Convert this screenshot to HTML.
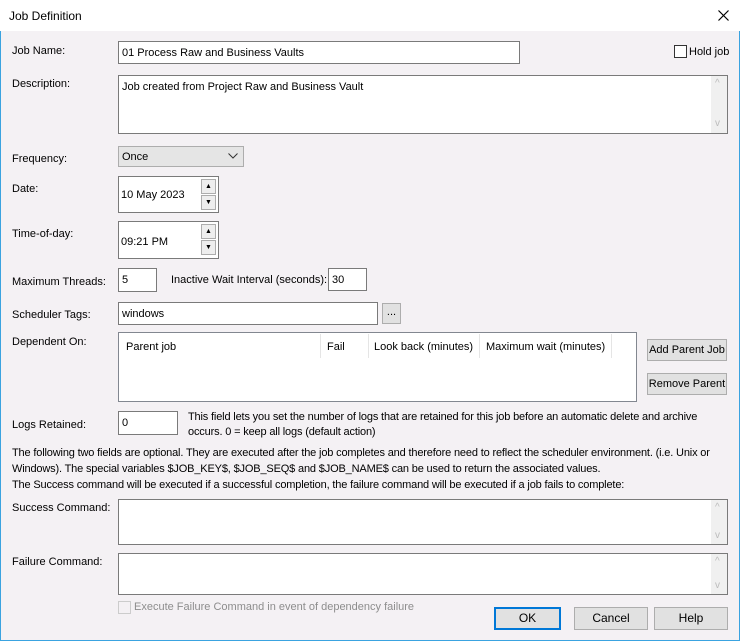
<!DOCTYPE html>
<html><head><meta charset="utf-8"><style>
*{box-sizing:border-box;margin:0;padding:0}
body{width:740px;height:641px;overflow:hidden;font-family:"Liberation Sans",sans-serif;font-size:11px;color:#000;background:#f4f1f4;position:relative}
.w{position:absolute;left:0;top:0;width:740px;height:641px;border:1px solid #3aa3e0;border-top:none}
.t{position:absolute;left:0;top:0;width:740px;height:31px;background:#fff}
.a{position:absolute;white-space:nowrap}
.l{margin-top:2px}
.p{letter-spacing:-0.16px}
.in{position:absolute;background:#fff;border:1px solid #7a7a7a;padding:5px 3px;white-space:nowrap;overflow:hidden}
.btn{position:absolute;background:#e1e1e1;border:1px solid #adadad;text-align:center;line-height:20px;white-space:nowrap}
.sp{position:absolute;width:15px;height:15px;background:#eee;border:1px solid #adadad;font-size:7px;text-align:center;line-height:13px}
.sa{position:absolute;color:#bbb;font-size:10px}
</style></head><body><div class="w"></div>
<div class="t"><div class="a" style="left:9px;top:9px;font-size:12px">Job Definition</div>
<svg class="a" style="left:718px;top:10px" width="11" height="11"><path d="M0.5 0.5L10.5 10.5M10.5 0.5L0.5 10.5" stroke="#000" stroke-width="1.2"/></svg></div>

<div class="a l" style="left:12px;top:43px">Job Name:</div>
<div class="in" style="left:118px;top:41px;width:402px;height:23px">01 Process Raw and Business Vaults</div>
<div class="a" style="left:674px;top:45px;width:13px;height:13px;background:#fff;border:1px solid #333"></div>
<div class="a l" style="left:689px;top:44px">Hold job</div>

<div class="a l" style="left:12px;top:76px">Description:</div>
<div class="in" style="left:118px;top:75px;width:610px;height:59px">Job created from Project Raw and Business Vault</div>
<div class="a" style="left:711px;top:76px;width:16px;height:57px;background:#f0f0f0"></div>
<div class="sa" style="left:715px;top:78px">^</div><div class="sa" style="left:715px;top:118px">v</div>

<div class="a l" style="left:12px;top:151px">Frequency:</div>
<div class="a" style="left:118px;top:146px;width:126px;height:21px;background:#e5e5e5;border:1px solid #adadad;padding:4px 3px">Once</div>
<svg class="a" style="left:228px;top:153px" width="10" height="6"><path d="M0.5 0.5L5 5L9.5 0.5" stroke="#333" fill="none"/></svg>

<div class="a l" style="left:12px;top:181px">Date:</div>
<div class="in" style="left:118px;top:176px;width:101px;height:37px;padding-top:12px;padding-left:2px">10 May 2023</div>
<div class="sp" style="left:201px;top:179px">▲</div><div class="sp" style="left:201px;top:195px">▼</div>

<div class="a l" style="left:12px;top:226px">Time-of-day:</div>
<div class="in" style="left:118px;top:221px;width:101px;height:38px;padding-top:14px;padding-left:2px">09:21 PM</div>
<div class="sp" style="left:201px;top:224px">▲</div><div class="sp" style="left:201px;top:240px">▼</div>

<div class="a l" style="left:12px;top:274px">Maximum Threads:</div>
<div class="in" style="left:118px;top:268px;width:39px;height:24px">5</div>
<div class="a l" style="left:171px;top:272px">Inactive Wait Interval (seconds):</div>
<div class="in" style="left:328px;top:268px;width:39px;height:23px">30</div>

<div class="a l" style="left:12px;top:307px">Scheduler Tags:</div>
<div class="in" style="left:118px;top:302px;width:260px;height:23px">windows</div>
<div class="btn" style="left:382px;top:303px;width:19px;height:21px;line-height:16px">...</div>

<div class="a l" style="left:12px;top:334px">Dependent On:</div>
<div class="a" style="left:118px;top:332px;width:519px;height:70px;background:#fff;border:1px solid #828790"></div>
<div class="a" style="left:126px;top:341px">Parent job</div>
<div class="a" style="left:327px;top:341px">Fail</div>
<div class="a" style="left:374px;top:341px">Look back (minutes)</div>
<div class="a" style="left:486px;top:341px">Maximum wait (minutes)</div>
<div class="a" style="left:320px;top:334px;width:1px;height:24px;background:#e5e5e5"></div>
<div class="a" style="left:368px;top:334px;width:1px;height:24px;background:#e5e5e5"></div>
<div class="a" style="left:479px;top:334px;width:1px;height:24px;background:#e5e5e5"></div>
<div class="a" style="left:611px;top:334px;width:1px;height:24px;background:#e5e5e5"></div>
<div class="btn" style="left:647px;top:339px;width:80px;height:22px">Add Parent Job</div>
<div class="btn" style="left:647px;top:373px;width:80px;height:22px">Remove Parent</div>

<div class="a l" style="left:12px;top:417px">Logs Retained:</div>
<div class="in" style="left:118px;top:411px;width:60px;height:24px">0</div>
<div class="a p" style="left:188px;top:410px;line-height:15px">This field lets you set the number of logs that are retained for this job before an automatic delete and archive<br>occurs. 0 = keep all logs (default action)</div>
<div class="a p" style="left:12px;top:445px;line-height:16px">The following two fields are optional. They are executed after the job completes and therefore need to reflect the scheduler environment. (i.e. Unix or<br>Windows). The special variables $JOB_KEY$, $JOB_SEQ$ and $JOB_NAME$ can be used to return the associated values.</div>
<div class="a p" style="left:12px;top:479px">The Success command will be executed if a successful completion, the failure command will be executed if a job fails to complete:</div>

<div class="a l" style="left:12px;top:500px">Success Command:</div>
<div class="in" style="left:118px;top:499px;width:610px;height:46px"></div>
<div class="a" style="left:711px;top:500px;width:16px;height:44px;background:#f0f0f0"></div>
<div class="sa" style="left:715px;top:502px">^</div><div class="sa" style="left:715px;top:530px">v</div>

<div class="a l" style="left:12px;top:554px">Failure Command:</div>
<div class="in" style="left:118px;top:553px;width:610px;height:42px"></div>
<div class="a" style="left:711px;top:554px;width:16px;height:40px;background:#f0f0f0"></div>
<div class="sa" style="left:715px;top:556px">^</div><div class="sa" style="left:715px;top:580px">v</div>

<div class="a" style="left:118px;top:601px;width:13px;height:13px;border:1px solid #ccc;background:#f4f1f4"></div>
<div class="a" style="left:134px;top:601px;color:#8d8d8d">Execute Failure Command in event of dependency failure</div>
<div class="btn" style="left:494px;top:607px;width:67px;height:23px;border:2px solid #0078d7;line-height:19px;font-size:12px">OK</div>
<div class="btn" style="left:574px;top:607px;width:74px;height:23px;font-size:12px">Cancel</div>
<div class="btn" style="left:654px;top:607px;width:74px;height:23px;font-size:12px">Help</div>
</body></html>
